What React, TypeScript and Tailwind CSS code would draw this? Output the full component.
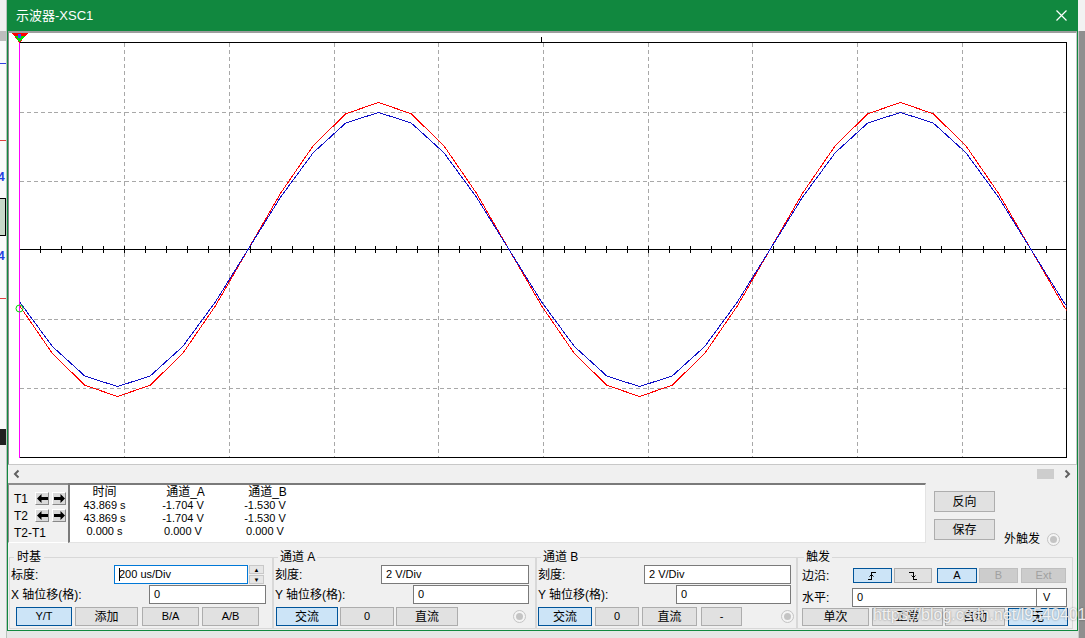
import React from 'react';

// plot frame in page coordinates
const X0 = 19.5, X1 = 1066.5, Y0 = 42.5, Y1 = 457.5;
const CY = 249.5;
const DX = (X1 - X0) / 10;
const DY = (Y1 - Y0) / 6;
const PER = 522, ZC = 248;

function wave(amp: number) {
  const step = PER / 16;
  const peak = ZC + PER / 4;
  let x = peak - Math.ceil((peak - X0) / step) * step;
  const pts: string[] = [];
  while (x <= X1 + step) {
    const y = CY - amp * Math.sin((2 * Math.PI * (x - ZC)) / PER);
    pts.push(`${x.toFixed(1)},${y.toFixed(1)}`);
    x += step;
  }
  return pts.join(' ');
}

const Plot = () => {
  const ticks: number[] = [];
  for (let i = 1; i < 50; i++) ticks.push(Math.round(X0 + (i * DX) / 5) + 0.5);
  return (
    <svg width={1067} height={431} className="block" shapeRendering="crispEdges">
      <g transform="translate(-9,-33)">
        <defs>
          <clipPath id="frame">
            <rect x={X0} y={Y0} width={X1 - X0} height={Y1 - Y0} />
          </clipPath>
        </defs>
        {[1, 2, 3, 4, 5, 6, 7, 8, 9].map(i => {
          const x = Math.round(X0 + i * DX) + 0.5;
          return <line key={i} x1={x} x2={x} y1={Y0} y2={Y1} stroke="#a8a8a8" strokeDasharray="4 3" />;
        })}
        {[1, 2, 4, 5].map(j => {
          const y = Math.round(Y0 + j * DY) + 0.5;
          return <line key={j} x1={X0} x2={X1} y1={y} y2={y} stroke="#a8a8a8" strokeDasharray="4 3" />;
        })}
        <line x1={X0} x2={X1} y1={CY} y2={CY} stroke="#000" />
        {ticks.map(x => (
          <line key={x} x1={x} x2={x} y1={246} y2={253} stroke="#000" />
        ))}
        <line x1={541.5} x2={541.5} y1={37} y2={43} stroke="#000" />
        <rect x={X0} y={Y0} width={X1 - X0} height={Y1 - Y0} fill="none" stroke="#000" />
        <g clipPath="url(#frame)">
          <polyline points={wave(147)} fill="none" stroke="#ff0000" />
          <polyline points={wave(137)} fill="none" stroke="#1010c8" />
        </g>
        <line x1={19.5} x2={19.5} y1={34} y2={458} stroke="#ff00ff" />
        <circle cx={19.5} cy={308.5} r={3.5} fill="none" stroke="#00d000" shapeRendering="auto" />
        <polygon points="12,33 28,33 19.5,43" fill="#ff0000" />
        <polygon points="14,35.5 26,35.5 19.5,42" fill="#00e000" />
        <rect x={18} y={34} width={3} height={4} fill="#3050ff" />
      </g>
    </svg>
  );
};

const Btn = ({ w, sel, dis, children, className = '' }: any) => (
  <div
    className={`${w} ${className} h-full shrink-0 flex items-center justify-center border ${
      sel
        ? 'bg-[#cce4f7] border-[#005499]'
        : dis
        ? 'bg-[#cccccc] border-[#bfbfbf] text-[#a0a0a0]'
        : 'bg-[#e1e1e1] border-[#adadad]'
    }`}
  >
    {children}
  </div>
);

const Input = ({ w, value, focus, className = '' }: any) => (
  <div
    className={`${w} ${className} h-full shrink-0 bg-white border flex items-center pl-[4px] text-[11px] ${
      focus ? 'border-[#0078d7]' : 'border-[#7a7a7a]'
    }`}
  >
    {focus && <span className="w-px h-[13px] bg-black -mr-px" />}
    {value}
  </div>
);

const Radio = ({ className = '' }: any) => (
  <div className={`${className} w-[13px] h-[13px] shrink-0 rounded-full border border-[#c4c4c4] bg-[#f4f4f4] flex items-center justify-center`}>
    <div className="w-[7px] h-[7px] rounded-full bg-[#c4c4c4]" />
  </div>
);

const ArrowBtn = ({ dir, className = '' }: any) => (
  <div className={`${className} w-[14px] h-[13px] bg-[#d9d9d9] border border-t-white border-l-white border-r-[#888] border-b-[#888] flex items-center justify-center`}>
    <svg width="11" height="9" viewBox="0 0 11 9">
      {dir === 'l' ? (
        <polygon points="0,4.5 4.5,0 4.5,3 11,3 11,6 4.5,6 4.5,9" fill="#000" />
      ) : (
        <polygon points="11,4.5 6.5,0 6.5,3 0,3 0,6 6.5,6 6.5,9" fill="#000" />
      )}
    </svg>
  </div>
);

const Edge = ({ rising }: { rising: boolean }) => (
  <svg width="11" height="10" viewBox="0 0 11 10" shapeRendering="crispEdges">
    {rising ? (
      <>
        <path d="M1 8.5H4.5V1.5H9" fill="none" stroke="#000" />
        <path d="M2.5 5.5L4.5 3.5L6.5 5.5" fill="none" stroke="#000" shapeRendering="auto" />
      </>
    ) : (
      <>
        <path d="M1 1.5H5.5V8.5H9" fill="none" stroke="#000" />
        <path d="M3.5 4.5L5.5 6.5L7.5 4.5" fill="none" stroke="#000" shapeRendering="auto" />
      </>
    )}
  </svg>
);

const Chevron = ({ dir }: { dir: 'l' | 'r' }) => (
  <svg width="7" height="10" viewBox="0 0 7 10">
    <polyline
      points={dir === 'l' ? '5.5,1.5 2,5 5.5,8.5' : '1.5,1.5 5,5 1.5,8.5'}
      fill="none"
      stroke="#606060"
      strokeWidth="2"
    />
  </svg>
);

const LeftStrip = () => (
  <div className="w-[7px] h-full shrink-0 flex flex-col bg-[#fafafa] border-r border-[#b8c4bc]">
    <div className="h-[31px] bg-[#f0f0f0]" />
    <div className="h-[10px] bg-[#bdbdbd]" />
    <div className="h-[22px]" />
    <div className="h-px bg-[#3040e0]" />
    <div className="h-[76px]" />
    <div className="h-px bg-[#e04040]" />
    <div className="h-[30px]" />
    <div className="h-[12px] text-[12px] leading-[12px] font-bold text-[#2040e0] -ml-[2px]">4</div>
    <div className="h-[15px]" />
    <div className="h-[38px] border-y border-r border-black bg-[#c8d8c8]" />
    <div className="h-[14px]" />
    <div className="h-[12px] text-[12px] leading-[12px] font-bold text-[#2040e0] -ml-[2px]">4</div>
    <div className="h-[36px]" />
    <div className="h-px bg-[#e04040]" />
    <div className="h-[130px]" />
    <div className="h-[16px] bg-[#202020]" />
    <div className="flex-1 bg-[#f0f0f0]" />
  </div>
);

const RightStrip = () => (
  <div className="w-[7px] h-full shrink-0 flex flex-col">
    <div className="h-[31px] bg-[#f2f2f2]" />
    <div className="flex-1 bg-[#8f8f8f] border-l border-[#c8c8c8]" />
  </div>
);

export default function App() {
  return (
    <div className="w-[1085px] h-[638px] flex overflow-hidden bg-[#e6e6e6] text-black font-['Liberation_Sans','Noto_Sans_CJK_SC',sans-serif] select-none">
      <LeftStrip />
      <div className="w-[1071px] shrink-0 flex flex-col">
        <div className="h-[631px] flex flex-col bg-[#f0f0f0] border-x border-b border-[#11883f]">
          {/* title bar */}
          <div className="h-[31px] shrink-0 -mx-px bg-[#11883f] flex items-center justify-between text-white">
            <span className="pl-[9px] text-[13px] leading-none">示波器-XSC1</span>
            <svg width="11" height="11" viewBox="0 0 11 11" className="mr-[11px]">
              <path d="M0.5 0.5L10.5 10.5M10.5 0.5L0.5 10.5" stroke="#fff" strokeWidth="1.2" />
            </svg>
          </div>

          {/* plot */}
          <div className="h-[434px] shrink-0 bg-white border-t-2 border-l border-r border-b border-t-[#9d9d9d] border-l-[#8a8a8a] border-r-[#c8c8c8] border-b-[#c8c8c8]">
            <Plot />
          </div>

          {/* scroll bar */}
          <div className="h-[18px] shrink-0 flex items-center">
            <div className="ml-[5px]"><Chevron dir="l" /></div>
            <div className="flex-1" />
            <div className="w-[17px] h-[10px] bg-[#cdcdcd]" />
            <div className="ml-[10px] mr-[6px]"><Chevron dir="r" /></div>
          </div>

          {/* cursor readout */}
          <div className="h-[62px] shrink-0 flex">
            <div className="w-[60px] h-[60px] border-t-2 border-l border-[#8c8c8c] border-b border-b-white text-[12px]">
              <div className="flex items-center h-[13px] mt-[7px]">
                <span className="w-[26px] pl-[5px]">T1</span>
                <ArrowBtn dir="l" />
                <ArrowBtn dir="r" className="ml-[3px]" />
              </div>
              <div className="flex items-center h-[13px] mt-[4px]">
                <span className="w-[26px] pl-[5px]">T2</span>
                <ArrowBtn dir="l" />
                <ArrowBtn dir="r" className="ml-[3px]" />
              </div>
              <div className="h-[13px] mt-[5px] pl-[5px] leading-[13px]">T2-T1</div>
            </div>
            <div className="w-[858px] h-[60px] bg-white border-t-2 border-l-2 border-[#7a7a7a] border-r border-b border-r-[#e3e3e3] border-b-[#e3e3e3] flex pt-[1px] text-[11px] leading-[13px]">
              <div className="w-[69px] text-center">
                <div className="text-[12px]">时间</div>
                <div>43.869 s</div>
                <div>43.869 s</div>
                <div>0.000 s</div>
              </div>
              <div className="w-[88px] text-center">
                <div className="text-[12px] pl-[5px]">通道_A</div>
                <div>-1.704 V</div>
                <div>-1.704 V</div>
                <div>0.000 V</div>
              </div>
              <div className="w-[76px] text-center">
                <div className="text-[12px] pl-[5px]">通道_B</div>
                <div>-1.530 V</div>
                <div>-1.530 V</div>
                <div>0.000 V</div>
              </div>
            </div>
            <div className="ml-[8px] w-[61px] flex flex-col text-[12px]">
              <Btn w="w-[61px]" className="!h-[21px] mt-[8px]">反向</Btn>
              <Btn w="w-[61px]" className="!h-[21px] mt-[7px]">保存</Btn>
            </div>
            <div className="ml-[9px] pt-[49px] flex items-center h-[63px] text-[12px]">
              <span>外触发</span>
              <Radio className="ml-[7px]" />
            </div>
          </div>

          {/* controls */}
          <div className="flex-1 flex pt-[5px] text-[12px]">
            <fieldset className="w-[264px] h-[79px] ml-[1px] shrink-0 border border-[#d8d8d8]">
              <legend className="ml-[4px] px-[3px] leading-[15px]">时基</legend>
              <div className="flex h-[19px] items-center">
                <span className="w-[104px] pl-[1px]">标度:</span>
                <Input w="w-[134px]" value="200 us/Div" focus />
                <div className="ml-[1px] w-[15px] h-full flex flex-col gap-px">
                  <div className="flex-1 bg-[#e6e6e6] border border-[#c8c8c8] flex items-center justify-center text-[6px] leading-none">▲</div>
                  <div className="flex-1 bg-[#e6e6e6] border border-[#c8c8c8] flex items-center justify-center text-[6px] leading-none">▼</div>
                </div>
              </div>
              <div className="flex h-[19px] items-center mt-[1px]">
                <span className="w-[139px] pl-[1px]">X 轴位移(格):</span>
                <Input w="w-[117px]" value="0" />
              </div>
              <div className="flex h-[19px] items-center mt-[3px] text-[11px]">
                <Btn w="w-[56px]" className="ml-[6px]" sel>Y/T</Btn>
                <Btn w="w-[63px]" className="ml-[3px] text-[12px]">添加</Btn>
                <Btn w="w-[57px]" className="ml-[4px]">B/A</Btn>
                <Btn w="w-[57px]" className="ml-[3px]">A/B</Btn>
              </div>
            </fieldset>

            <fieldset className="w-[263px] h-[79px] shrink-0 border border-[#d8d8d8]">
              <legend className="ml-[4px] px-[2px] leading-[15px]">通道 A</legend>
              <div className="flex h-[19px] items-center">
                <span className="w-[107px] pl-[1px]">刻度:</span>
                <Input w="w-[148px]" value="2  V/Div" />
              </div>
              <div className="flex h-[19px] items-center mt-[1px]">
                <span className="w-[139px] pl-[1px]">Y 轴位移(格):</span>
                <Input w="w-[116px]" value="0" />
              </div>
              <div className="flex h-[19px] items-center mt-[3px]">
                <Btn w="w-[62px]" className="ml-[2px]" sel>交流</Btn>
                <Btn w="w-[54px]" className="ml-[2px] text-[11px]">0</Btn>
                <Btn w="w-[62px]" className="ml-[2px]">直流</Btn>
                <Radio className="ml-[55px]" />
              </div>
            </fieldset>

            <fieldset className="w-[261px] h-[79px] shrink-0 border border-[#d8d8d8]">
              <legend className="ml-[4px] px-[2px] leading-[15px]">通道 B</legend>
              <div className="flex h-[19px] items-center">
                <span className="w-[107px] pl-[1px]">刻度:</span>
                <Input w="w-[147px]" value="2  V/Div" />
              </div>
              <div className="flex h-[19px] items-center mt-[1px]">
                <span className="w-[139px] pl-[1px]">Y 轴位移(格):</span>
                <Input w="w-[115px]" value="0" />
              </div>
              <div className="flex h-[19px] items-center mt-[3px]">
                <Btn w="w-[54px]" className="ml-[1px]" sel>交流</Btn>
                <Btn w="w-[44px]" className="ml-[3px] text-[11px]">0</Btn>
                <Btn w="w-[55px]" className="ml-[3px]">直流</Btn>
                <Btn w="w-[41px]" className="ml-[4px] text-[11px]">-</Btn>
                <Radio className="ml-[39px]" />
              </div>
            </fieldset>

            <fieldset className="w-[276px] h-[79px] shrink-0 border border-[#d8d8d8]">
              <legend className="ml-[6px] px-[2px] leading-[15px]">触发</legend>
              <div className="flex h-[15px] items-center mt-[3px]">
                <span className="w-[55px] pl-[4px]">边沿:</span>
                <Btn w="w-[39px]" sel><Edge rising /></Btn>
                <Btn w="w-[38px]" className="ml-[2px]"><Edge rising={false} /></Btn>
                <Btn w="w-[40px]" className="ml-[5px] text-[11px]" sel>A</Btn>
                <Btn w="w-[39px]" className="ml-[2px] text-[11px]" dis>B</Btn>
                <Btn w="w-[45px]" className="ml-[3px] text-[11px]" dis>Ext</Btn>
              </div>
              <div className="flex h-[19px] items-center mt-[5px]">
                <span className="w-[54px] pl-[4px]">水平:</span>
                <Input w="w-[185px]" value="0" />
                <div className="w-[30px] h-full bg-white border border-l-0 border-[#7a7a7a] flex items-center pl-[6px] text-[11px]">V</div>
              </div>
              <div className="flex h-[18px] items-center mt-[1px]">
                <Btn w="w-[67px]" className="ml-[4px]">单次</Btn>
                <Btn w="w-[71px]" className="ml-[3px]">正常</Btn>
                <Btn w="w-[60px]" className="ml-[2px]">自动</Btn>
                <Btn w="w-[60px]" className="ml-[3px] relative" sel>
                  无
                </Btn>
              </div>
            </fieldset>
          </div>
        </div>
        <div className="flex-1 relative">
          <span className="absolute left-[866px] -top-[24px] text-[16px] leading-none text-white/85 [text-shadow:0_0_2px_rgba(0,0,0,0.45)] whitespace-nowrap font-['Liberation_Sans',sans-serif]">
            https://blog.csdn.net/l9540401
          </span>
        </div>
      </div>
      <RightStrip />
    </div>
  );
}
